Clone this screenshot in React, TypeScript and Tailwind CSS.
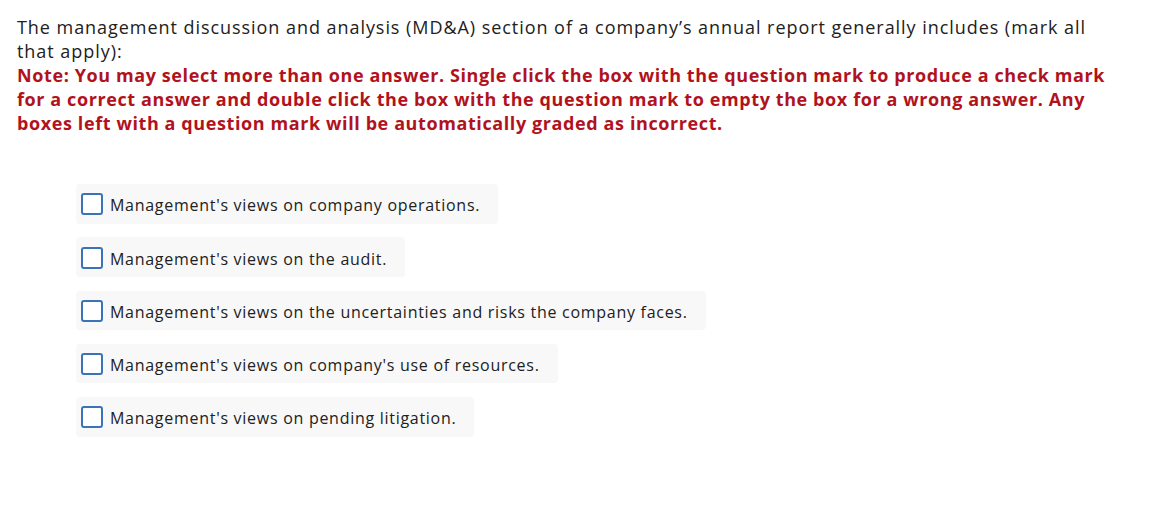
const options = [
  "Management's views on company operations.",
  "Management's views on the audit.",
  "Management's views on the uncertainties and risks the company faces.",
  "Management's views on company's use of resources.",
  "Management's views on pending litigation.",
];

export default function App() {
  return (
    <div className="min-h-[526px] w-[1174px] bg-white pl-[17px] pt-[15px] font-['Open_Sans','Liberation_Sans',sans-serif]">
      <p className="whitespace-nowrap text-[18px] leading-[24px] tracking-[0.95px] text-[#212121]">
        The management discussion and analysis (MD&amp;A) section of a company’s annual report generally includes (mark all
        <br />
        that apply):
      </p>
      <p className="whitespace-nowrap text-[18px] font-bold leading-[24px] tracking-[0.6px] text-[#b1121c]">
        Note: You may select more than one answer. Single click the box with the question mark to produce a check mark
        <br />
        for a correct answer and double click the box with the question mark to empty the box for a wrong answer. Any
        <br />
        boxes left with a question mark will be automatically graded as incorrect.
      </p>
      <ul className="mt-[49px] flex flex-col gap-[13.75px] pl-[59px]">
        {options.map((text) => (
          <li key={text} className="flex">
            <div className="flex h-[39.5px] items-center gap-[7px] rounded-[4px] bg-[#f8f8f8] pl-[5px] pr-[18px]">
              <span className="mt-[1px] h-[22px] w-[22px] rounded-[3px] border-2 border-[#3a73b8] bg-white" />
              <span className="mt-[3px] text-[16px] tracking-[0.72px] text-[#212121]">{text}</span>
            </div>
          </li>
        ))}
      </ul>
    </div>
  );
}
